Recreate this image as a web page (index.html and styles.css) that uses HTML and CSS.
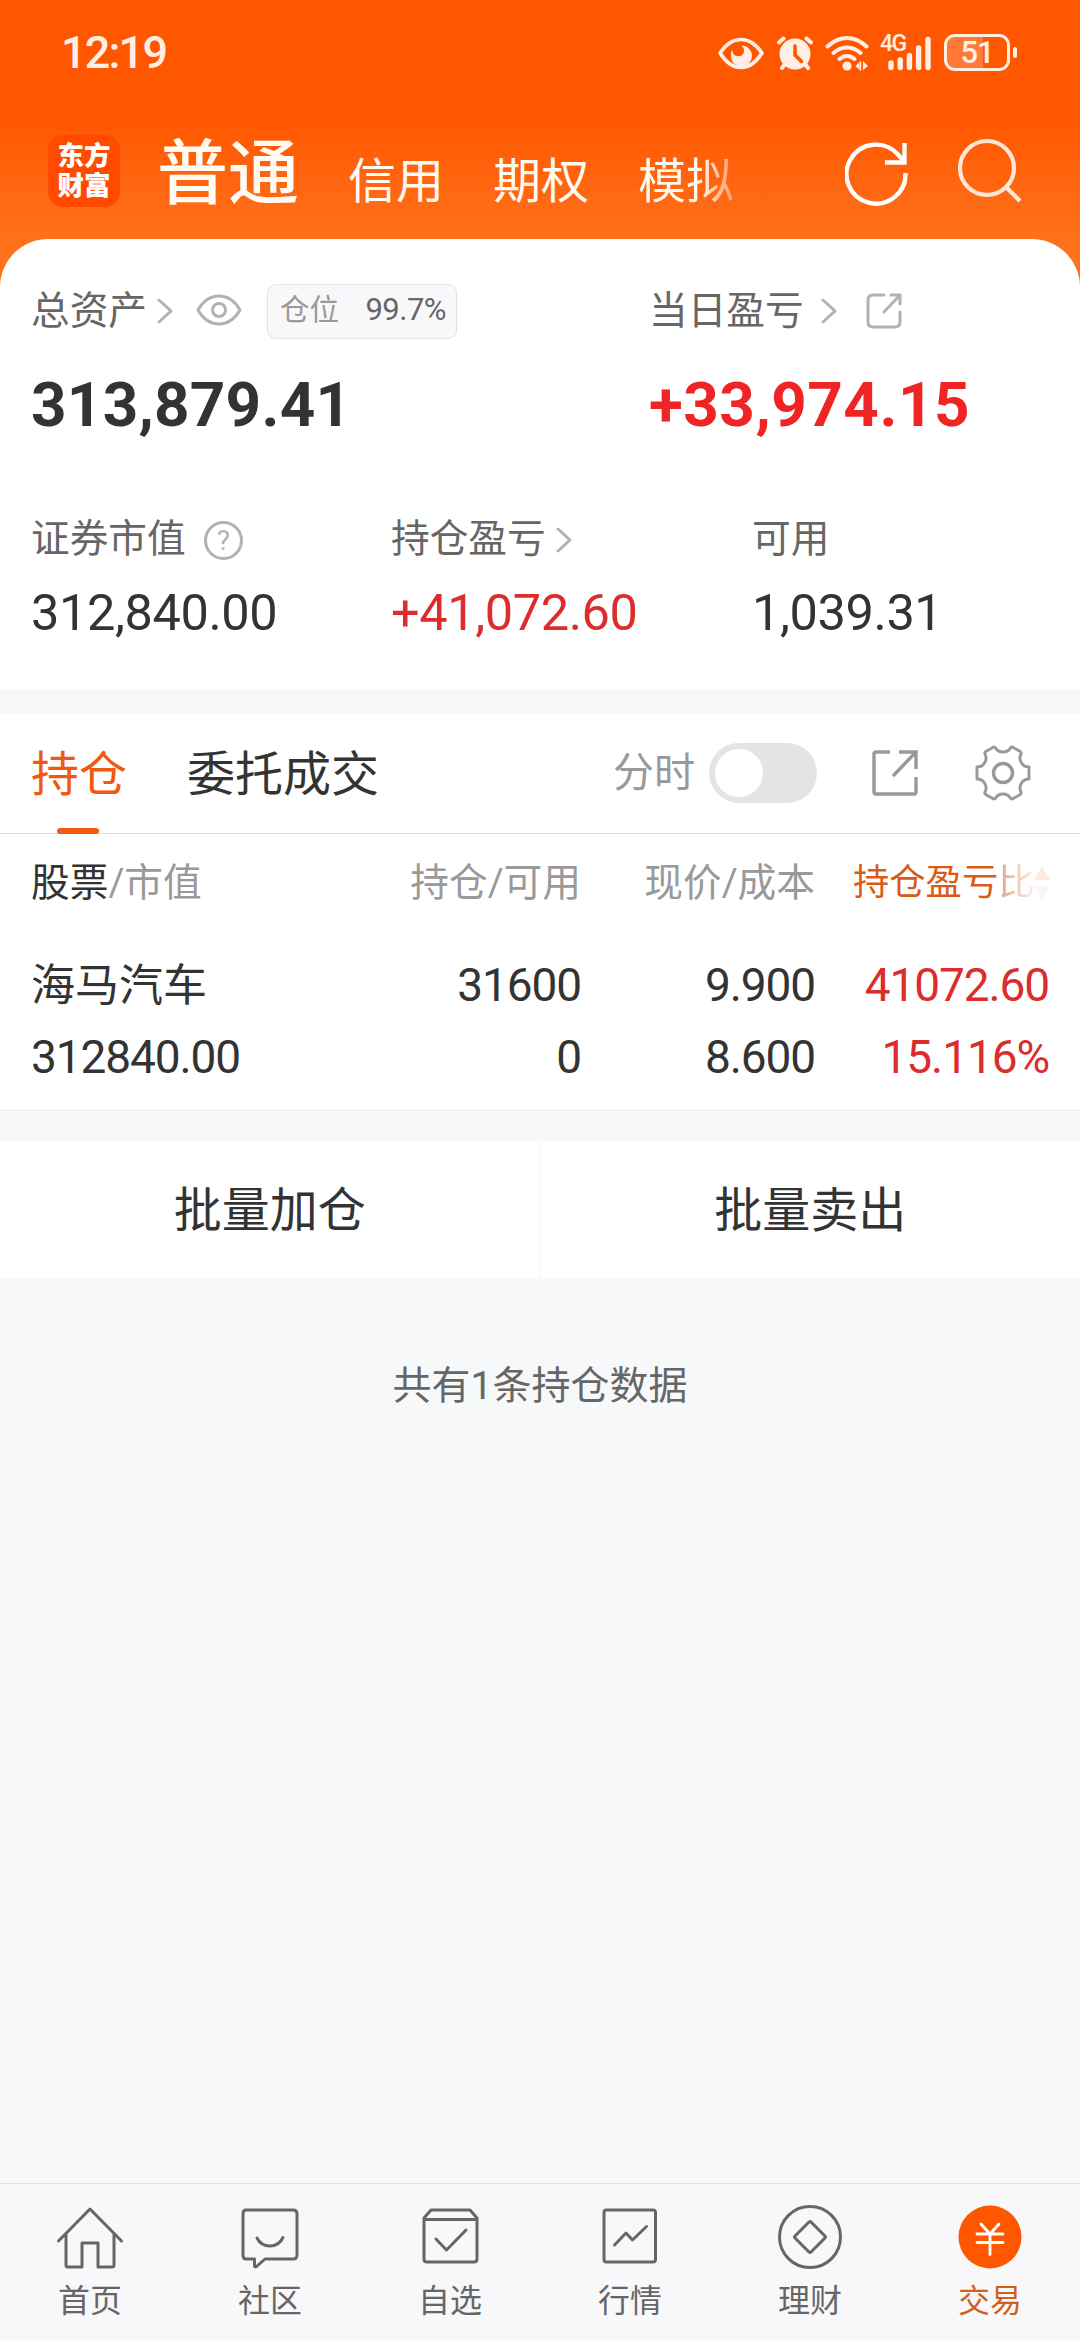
FILE: index.html
```html
<!DOCTYPE html>
<html lang="zh-CN">
<head>
<meta charset="utf-8">
<title>交易</title>
<link rel="stylesheet" href="styles.css">
</head>
<body>
<div class="app">
  <header class="top">
    <div class="status">
      <span class="clock">12:19</span>
      <svg class="status-eye" width="46" height="34" viewBox="0 0 46 34"><path d="M2 17Q11 3.500 23 3.500T44 17Q35 31.500 23 31.500T2 17Z" fill="none" stroke="currentColor" stroke-width="3.600" stroke-linejoin="round"/><path d="M23.500 9.500A10.500 10.500 0 1 1 13 19q0-3 1.200-5.200Q14.500 20 20 20.300q6-.3 6-5.600 0-3.200-2.500-5.200Z" fill="currentColor"/></svg>
      <svg class="status-alarm" width="36" height="36" viewBox="0 0 36 36"><circle cx="18" cy="19" r="15.500" fill="currentColor"/><path d="M2 7.500 6.500 3.500M34 7.500 29.500 3.500M8 29l-3 4M28 29l3 4" stroke="currentColor" stroke-width="4" stroke-linecap="round"/><path d="M18 11v9l6.500 6.500" fill="none" stroke="#ff5700" stroke-width="3.500" stroke-linecap="round"/></svg>
      <svg class="status-wifi" width="44" height="36" viewBox="0 0 44 36" fill="none" stroke="currentColor" stroke-width="4" stroke-linecap="round"><path d="M2.500 11.500Q11.500 3 22 3t19.500 8.500M8.500 18Q14.500 12.500 22 12.500T35.500 18M14.500 24q3.500-3 7.500-3t7.500 3"/><circle cx="22" cy="31" r="4.500" fill="currentColor" stroke="none"/><path d="m30.500 31 4-4v8ZM43 31l-5-5v9Z" fill="currentColor" stroke="none"/><path d="M35.500 27v8" stroke-width="1.500"/></svg>
      <span class="cell"><span class="cell-type">4G</span><svg width="44" height="36" viewBox="0 0 44 36" stroke="currentColor" stroke-width="5.400" stroke-linecap="round"><path d="M3 28v4.500M12.200 25v7.500M21.400 20.500v12M30.600 13v19.500M40 4.500v28"/></svg></span>
      <span class="battery"><span class="battery-level">51</span></span>
    </div>
    <div class="nav">
      <span class="logo"><span>东方</span><span>财富</span></span>
      <nav class="accounts">
        <span class="account-on">普通</span><span class="account">信用</span><span class="account">期权</span><span class="account account-fade">模拟</span>
      </nav>
      <svg class="refresh" width="64" height="66" viewBox="0 0 64 66" fill="none" stroke="#fff" stroke-width="4.400"><path d="M60.500 33A29.500 29.500 0 1 1 53 14.500L59 22"/><path d="M59.500 3v19.500H40"/></svg>
      <svg class="search" width="64" height="66" viewBox="0 0 64 66" fill="none" stroke="#ffe6d6" stroke-width="4.200"><circle cx="29" cy="30" r="27"/><path d="m48 49 14 14"/></svg>
    </div>
  </header>

  <section class="summary">
    <div class="totals">
      <div class="label-row">
        <span class="label">总资产</span>
        <svg class="chev chev-a" width="16" height="26" viewBox="0 0 16 26"><path d="m2 2 12 11L2 24"/></svg>
        <svg class="eye" width="46" height="32" viewBox="0 0 46 32" fill="none" stroke="#b2b2b2" stroke-width="3"><path d="M2 16Q10 2 23 2t21 14Q36 30 23 30T2 16Z" stroke-linejoin="round"/><circle cx="23" cy="16" r="6.500"/></svg>
        <span class="ratio"><span class="ratio-name">仓位</span><span class="ratio-val">99.7%</span></span>
      </div>
      <div class="label-row">
        <span class="label">当日盈亏</span>
        <svg class="chev chev-b" width="16" height="26" viewBox="0 0 16 26"><path d="m2 2 12 11L2 24"/></svg>
        <svg class="share" width="36" height="36" viewBox="0 0 36 36" fill="none" stroke="#b2b2b2" stroke-width="3" stroke-linecap="round"><path d="M18 2H7Q2 2 2 7v22q0 5 5 5h22q5 0 5-5V19M25 2h9v9M34 2 18 19"/></svg>
      </div>
      <div class="big">313,879.41</div>
      <div class="big up">+33,974.15</div>
    </div>
    <div class="details">
      <div class="label-row"><span class="label">证券市值</span><span class="help">?</span></div>
      <div class="label-row"><span class="label">持仓盈亏</span><svg class="chev chev-c" width="16" height="26" viewBox="0 0 16 26"><path d="m2 2 12 11L2 24"/></svg></div>
      <div class="label-row"><span class="label">可用</span></div>
      <div class="mid">312,840.00</div>
      <div class="mid up">+41,072.60</div>
      <div class="mid">1,039.31</div>
    </div>
  </section>

  <section class="holdings">
    <div class="tabs">
      <span class="tab tab-on">持仓</span><span class="tab">委托成交</span>
      <span class="minute">分时</span>
      <span class="toggle"><span class="knob"></span></span>
      <svg class="export" width="48" height="48" viewBox="0 0 48 48" fill="none" stroke="#999" stroke-width="3.400"><path d="M19 3H5Q3 3 3 5v38q0 2 2 2h38q2 0 2-2V28M28 3h17v17M44 4 22 27"/></svg>
      <svg class="gear" width="58" height="58" viewBox="-29 -29 58 58" fill="none" stroke="#999" stroke-width="2.900" stroke-linejoin="round"><path d="M26 6A9 9 0 0 0 18.200 19.500Q18.500 20.800 16.500 22L11 25Q9 26.500 7.800 25.500A9 9 0 0 0-7.800 25.500Q-9 26.500-11 25L-16.500 22Q-18.500 20.800-18.200 19.500A9 9 0 0 0-26 6V-6A9 9 0 0 0-18.200-19.500Q-18.500-20.800-16.500-22L-11-25Q-9-26.500-7.800-25.500A9 9 0 0 0 7.800-25.500Q9-26.500 11-25L16.500-22Q18.500-20.800 18.200-19.500A9 9 0 0 0 26-6Z"/><circle r="9.500" stroke-width="3.400"/></svg>
    </div>
    <div class="table">
      <div class="thead"><span class="dark">股票</span>/市值</div>
      <div class="thead num">持仓/可用</div>
      <div class="thead num">现价/成本</div>
      <div class="thead sorted">持仓盈亏<span class="sort-fade">比</span><svg width="16" height="34" viewBox="0 0 16 34"><path d="M8 0l8 14H0Z" fill="#fee9e0"/><path d="M8 34l8-14H0Z" fill="#f7f7f8"/></svg></div>
      <div class="cell-text stock">海马汽车</div>
      <div class="cell-text num">31600</div>
      <div class="cell-text num">9.900</div>
      <div class="cell-text num up">41072.60</div>
      <div class="cell-text">312840.00</div>
      <div class="cell-text num">0</div>
      <div class="cell-text num">8.600</div>
      <div class="cell-text num up">15.116%</div>
    </div>
  </section>

  <div class="batch"><span class="batch-btn">批量加仓</span><span class="batch-btn">批量卖出</span></div>
  <p class="count">共有1条持仓数据</p>

  <nav class="dock">
    <div class="dock-item">
      <svg width="68" height="68" viewBox="0 0 68 68"><path d="M2.500 37 34 5l31.500 32M10 30v31q0 2 2 2h14V39h16v24h14q2 0 2-2V30"/></svg>首页</div>
    <div class="dock-item">
      <svg width="68" height="68" viewBox="0 0 68 68"><path d="M10 6h47q4 0 4 4v41q0 4-4 4H29l-9 8q-1.500 0-1.500-1.500V55H10q-3 0-3-4V10q0-4 3-4Z"/><path d="M21 34q4 8 13 8t13-8.500"/></svg>社区</div>
    <div class="dock-item">
      <svg width="68" height="68" viewBox="0 0 68 68"><path d="m8 14 7-8h39l7 8v41q0 3-3 3H11q-3 0-3-3ZM8 15.500h53M20 35l10.500 11L50 26"/></svg>自选</div>
    <div class="dock-item">
      <svg width="68" height="68" viewBox="0 0 68 68"><path d="M10.500 6H57q2.500 0 2.500 2.500v47Q59.500 58 57 58H10.500Q8 58 8 55.500v-47Q8 6 10.500 6ZM18.500 41 30 29l6.500 7L50.500 22.500"/></svg>行情</div>
    <div class="dock-item">
      <svg width="68" height="68" viewBox="0 0 68 68"><circle cx="34" cy="33" r="30.500"/><path d="M33 18q1-1 2 0l14 14q1 1 0 2L35 48q-1 1-2 0L19 34q-1-1 0-2Z"/></svg>理财</div>
    <div class="dock-item dock-on">
      <svg width="68" height="68" viewBox="0 0 68 68"><circle cx="34" cy="33" r="31.500" fill="#ff5700" stroke="none"/><path d="m25 20 9 10 9-10M34 30v20.500M21 30h26M21 38.500h26" stroke="#fff" stroke-width="2.900"/></svg>交易</div>
  </nav>
</div>
</body>
</html>
```
FILE: styles.css
```css
* { box-sizing: border-box; }
body {
  margin: 0;
  font-family: Roboto, "Noto Sans CJK SC", sans-serif;
  color: #333;
  background: #f7f8fa;
}
svg { display: block; flex: none; }
.app { width: 1080px; height: 2340px; display: flex; flex-direction: column; overflow: hidden; }

/* header */
.top {
  height: 299px; margin-bottom: -60px; flex: none;
  background: linear-gradient(#ff5700 115px, #ff6a14 205px, #ff711a 240px);
}
.status { height: 106px; padding-left: 61px; display: flex; align-items: center; color: #ffeee4; }
.clock { width: 657px; font-size: 45px; font-weight: 500; line-height: 60px; letter-spacing: -1.800px; }
.status-alarm { margin-left: 13px; }
.status-wifi { margin-left: 12px; }
.cell { position: relative; margin-left: 19px; }
.cell-type { position: absolute; left: -8px; top: -3px; font-size: 23px; font-weight: 500; line-height: 24px; letter-spacing: -1.500px; }
.battery {
  position: relative; width: 66px; height: 37px; margin: -2px 0 0 12px;
  border: 3px solid currentColor; border-radius: 11px;
  background: linear-gradient(90deg, #ff7a35 36px, transparent 36px);
}
.battery::after {
  content: ""; position: absolute; right: -10px; top: 10px;
  width: 4px; height: 11px; border-radius: 2px; background: currentColor;
}
.battery-level { display: block; text-align: center; font-size: 31px; font-weight: 500; line-height: 32px; letter-spacing: -1px; }

.nav { height: 133px; padding-left: 48px; display: flex; align-items: flex-start; color: #fffaf2; }
.logo {
  width: 72px; height: 72px; margin-top: 29px; flex: none;
  display: flex; flex-direction: column; align-items: center; justify-content: center;
  border-radius: 15px; background: #ff4a00; color: #fff;
  font-size: 26.500px; font-weight: 900; line-height: 30px;
}
.accounts { width: 725px; padding: 23px 0 0 37px; display: flex; align-items: baseline; }
.account-on { font-size: 71px; font-weight: 500; line-height: 90px; }
.account { margin-left: 49px; font-size: 48px; line-height: 60px; }
.account-on + .account { margin-left: 49px; }
.account-fade {
  color: transparent; background: linear-gradient(90deg, #fffaf2 60px, #ff9a66 96px);
  -webkit-background-clip: text; background-clip: text;
}
.refresh { margin-top: 34px; }
.search { margin: 32px 0 0 49px; }

/* assets */
.summary { height: 450px; flex: none; padding: 45px 0 0 31px; border-radius: 48px 48px 0 0; background: #fff; }
.totals { display: grid; grid-template-columns: 618px 1fr; grid-template-rows: 54px 132px; align-items: center; }
.details { margin-top: 30px; display: grid; grid-template-columns: 360px 361px 1fr; grid-template-rows: 76px 72px; align-items: center; }
.label-row { display: flex; align-items: center; }
.label { color: #666; font-size: 38.700px; line-height: 54px; }
.details .label { padding-top: 2px; }
.chev { fill: none; stroke: #b2b2b2; stroke-width: 3; stroke-linecap: round; stroke-linejoin: round; }
.chev-a { margin-left: 10px; }
.chev-b { margin-left: 17px; }
.chev-c { margin-left: 10px; margin-top: 3px; }
.eye { margin-left: 23px; margin-top: -2px; }
.share { margin-left: 29px; }
.ratio {
  width: 190px; height: 55px; margin-left: 25px; padding: 0 10px 0 12px; display: flex; align-items: center; justify-content: space-between;
  border: 1px solid #e4e4e6; border-radius: 9px; background: #f8f8fb;
}
.ratio-name { color: #999; font-size: 29.500px; line-height: 40px; padding-bottom: 2px; }
.ratio-val { color: #666; font-size: 31px; line-height: 40px; letter-spacing: -.5px; padding-bottom: 2px; }
.help {
  width: 39px; height: 39px; margin: 4px 0 0 18px; border: 3px solid #b2b2b2; border-radius: 50%;
  color: #b2b2b2; font-size: 28px; line-height: 34px; text-align: center;
}
.big { font-size: 62px; font-weight: 700; line-height: 80px; letter-spacing: .25px; padding-top: 2px; }
.mid { font-size: 50.500px; line-height: 60px; letter-spacing: -.4px; padding-top: 1px; }
.up { color: #dc2c2c; }
.big.up { color: #ee2425; letter-spacing: .5px; }

/* holdings */
.holdings { height: 398px; flex: none; margin-top: 24px; border-bottom: 1px solid #ececec; background: #fff; }
.tabs { height: 121px; padding-left: 31px; display: flex; align-items: center; border-bottom: 1px solid #dedede; }
.tab { position: relative; padding-top: 3px; font-size: 48px; line-height: 60px; }
.tab + .tab { margin-left: 60px; }
.tab-on { color: #f05a10; }
.tab-on::after {
  content: ""; position: absolute; left: 26px; bottom: -29px;
  width: 42px; height: 6px; border-radius: 3px; background: #f05a10;
}
.minute { margin-left: 234px; width: 96px; padding-bottom: 1px; color: #999; font-size: 41px; line-height: 60px; }
.toggle { width: 108px; height: 60px; padding: 6px; border-radius: 30px; background: #e4e4e6; }
.knob { display: block; width: 48px; height: 48px; border-radius: 50%; background: #fff; }
.export { margin-left: 54px; }
.gear { margin-left: 55px; }
.table {
  padding-left: 31px; display: grid; grid-template-columns: 250px 300px 234px 234px;
  grid-template-rows: 96px 18px 72px 73px; align-items: center;
}
.thead { padding-top: 2px; color: #999; font-size: 38.700px; line-height: 54px; white-space: nowrap; grid-row: 1; }
.dark { color: #333; }
.num { text-align: right; }
.sorted { color: #d85c16; font-size: 36.300px; padding-left: 38px; display: flex; align-items: center; }
.sort-fade { color: transparent; background: linear-gradient(90deg, #e8a27c, #fdeee6); -webkit-background-clip: text; background-clip: text; }
.cell-text { padding-top: 1px; font-size: 46px; letter-spacing: -1.100px; line-height: 60px; }
.cell-text:nth-child(n+5):nth-child(-n+8) { grid-row: 3; }
.cell-text:nth-child(n+9) { grid-row: 4; }
.stock { font-size: 44px; letter-spacing: 0; padding-top: 3px; }

.batch { height: 138px; flex: none; margin-top: 30px; display: flex; background: #fff; }
.batch-btn { flex: 1; font-size: 48px; line-height: 140px; text-align: center; }
.batch-btn:first-child { border-right: 1px solid #f5f5f6; }
.count { margin: 77px 0 0; color: #666; font-size: 39px; line-height: 60px; text-align: center; }

/* bottom navigation */
.dock { height: 157px; flex: none; margin-top: auto; display: flex; border-top: 1px solid #e2e2e4; background: #f8f8fb; }
.dock-item {
  flex: 1; padding-top: 20px; display: flex; flex-direction: column; align-items: center;
  color: #666; font-size: 32px; line-height: 58px;
}
.dock-item svg { fill: none; stroke: #666; stroke-width: 3; stroke-linecap: round; stroke-linejoin: round; }
.dock-on { color: #d0601c; }
```
